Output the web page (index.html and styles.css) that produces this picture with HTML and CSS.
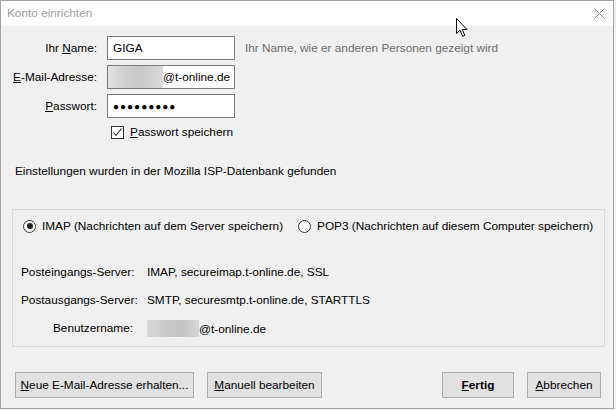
FILE: index.html
```html
<!DOCTYPE html>
<html lang="de">
<head>
<meta charset="utf-8">
<title>Konto einrichten</title>
<link rel="stylesheet" href="styles.css">
</head>
<body>
<div class="window">
  <div class="titlebar">
    <span class="title">Konto einrichten</span>
    <svg class="close" width="11" height="11" viewBox="0 0 11 11"><path d="M0.5 0.5L10.5 10.5M10.5 0.5L0.5 10.5" stroke="#8a8a8a" stroke-width="1" fill="none"/></svg>
  </div>
  <div class="content">
    <div class="form">
      <label class="lbl">Ihr <u>N</u>ame:</label>
      <div class="input">GIGA</div>
      <span class="hint">Ihr Name, wie er anderen Personen gezeigt wird</span>

      <label class="lbl"><u>E</u>-Mail-Adresse:</label>
      <div class="input email"><span class="blur blur-email"></span>@t-online.de</div>
      <span></span>

      <label class="lbl"><u>P</u>asswort:</label>
      <div class="input pw">●●●●●●●●●</div>
      <span></span>
    </div>

    <div class="check-row">
      <span class="checkbox"><svg width="11" height="11" viewBox="0 0 11 11"><path d="M1.5 5.5L4 8.5L9.5 1.5" stroke="#222" stroke-width="1.1" fill="none"/></svg></span>
      <span><u>P</u>asswort speichern</span>
    </div>

    <p class="found">Einstellungen wurden in der Mozilla ISP-Datenbank gefunden</p>

    <div class="group">
      <div class="radios">
        <span class="radio-item"><span class="radio checked"></span>IMAP (Nachrichten auf dem Server speichern)</span>
        <span class="radio-item"><span class="radio"></span>POP3 (Nachrichten auf diesem Computer speichern)</span>
      </div>
      <div class="servers">
        <span class="slbl">Posteingangs-Server:</span><span>IMAP, secureimap.t-online.de, SSL</span>
        <span class="slbl">Postausgangs-Server:</span><span>SMTP, securesmtp.t-online.de, STARTTLS</span>
        <span class="slbl">Benutzername:</span><span class="user"><span class="blur blur-user"></span>@t-online.de</span>
      </div>
    </div>

    <div class="buttons">
      <div class="left-btns">
        <button class="btn btn-new"><u>N</u>eue E-Mail-Adresse erhalten...</button>
        <button class="btn btn-manual"><u>M</u>anuell bearbeiten</button>
      </div>
      <div class="right-btns">
        <button class="btn btn-done"><u>F</u>ertig</button>
        <button class="btn btn-cancel"><u>A</u>bbrechen</button>
      </div>
    </div>
  </div>
  <svg class="cursor" width="13" height="20" viewBox="0 0 13 20"><path d="M0.5 0.5L0.5 15.5L4 12.2L6.6 18.3L8.8 17.4L6.3 11.5L11 11.5Z" fill="#fff" stroke="#000" stroke-width="1" stroke-linejoin="miter"/></svg>
</div>
</body>
</html>
```

FILE: styles.css
```css
* { box-sizing: border-box; }
html, body { margin: 0; padding: 0; background: #f0f0f0; }
body {
  font-family: "Liberation Sans", Arial, sans-serif;
  font-size: 11.8px;
  color: #000;
}
u { text-decoration: underline; text-underline-offset: 1px; }

.window {
  position: relative;
  width: 614px;
  height: 409px;
  border: 1px solid #a3a3a3;
  background: #f0f0f0;
  display: flex;
  flex-direction: column;
}

.titlebar {
  height: 25px;
  background: #fff;
  display: flex;
  align-items: center;
  justify-content: space-between;
  padding: 0 7px 1px 6px;
  flex: none;
}
.title { color: #9d9d9d; }
.close { margin-right: 1px; }

.content {
  flex: 1;
  padding: 10px 8px 0 11px;
  display: flex;
  flex-direction: column;
}

.form {
  display: grid;
  grid-template-columns: 85px 128px auto;
  grid-auto-rows: 24px;
  column-gap: 10px;
  row-gap: 5px;
  align-items: center;
}
.lbl { text-align: right; white-space: nowrap; }
.input {
  height: 24px;
  border: 1px solid #7a7a7a;
  background: #fff;
  display: flex;
  align-items: center;
  padding-left: 5px;
  white-space: nowrap;
  overflow: hidden;
}
.input.email { padding-left: 0; }
.input.pw { font-size: 10px; letter-spacing: 1px; padding-left: 5px; }
.hint { color: #6d6d6d; white-space: nowrap; }

.blur { display: inline-block; }
.blur-email {
  width: 55px;
  height: 22px;
  background: linear-gradient(90deg, #e4e4e4, #cfcfcf 30%, #c9c9c9 60%, #dadada 100%);
}
.blur-user {
  width: 52px;
  height: 17px;
  background: linear-gradient(90deg, #d9d9d9, #c8c8c8 40%, #c4c4c4 70%, #d8d8d8);
}

.check-row {
  display: flex;
  align-items: center;
  gap: 6px;
  margin: 7px 0 0 99px;
  height: 14px;
}
.checkbox {
  width: 13px;
  height: 13px;
  border: 1px solid #333;
  background: #fff;
  display: flex;
  align-items: center;
  justify-content: center;
}

.found {
  margin: 24px 0 0 3px;
  line-height: 16px;
}

.group {
  margin-top: 30px;
  border: 1px solid #d9d9d9;
  height: 138px;
  padding: 9px 0 0 10px;
}
.radios {
  display: flex;
  gap: 15px;
  height: 14px;
  align-items: center;
}
.radio-item { display: flex; align-items: center; gap: 6px; white-space: nowrap; }
.radio {
  width: 13px;
  height: 13px;
  border: 1px solid #333;
  border-radius: 50%;
  background: #fff;
  position: relative;
}
.radio.checked::after {
  content: "";
  position: absolute;
  left: 2.5px; top: 2.5px;
  width: 6px; height: 6px;
  border-radius: 50%;
  background: #222;
}

.servers {
  margin-top: 31px;
  display: grid;
  grid-template-columns: 112px auto;
  column-gap: 14px;
  row-gap: 12px;
  line-height: 16px;
  margin-left: -2px;
}
.slbl { text-align: right; white-space: nowrap; }
.user { display: flex; align-items: center; }

.buttons {
  margin-top: 25px;
  display: flex;
  justify-content: space-between;
  padding: 0 4px 0 3px;
}
.left-btns, .right-btns { display: flex; gap: 13px; }
.btn {
  height: 26px;
  background: #e1e1e1;
  border: 1px solid #adadad;
  font-family: inherit;
  font-size: 11.8px;
  color: #000;
  padding: 0 4px;
  margin: 0;
  white-space: nowrap;
}
.btn-new { width: 179px; }
.btn-manual { width: 115px; }
.btn-done { width: 72px; font-weight: bold; }
.btn-cancel { width: 74px; }

.cursor {
  position: absolute;
  left: 455px;
  top: 17px;
}
```
